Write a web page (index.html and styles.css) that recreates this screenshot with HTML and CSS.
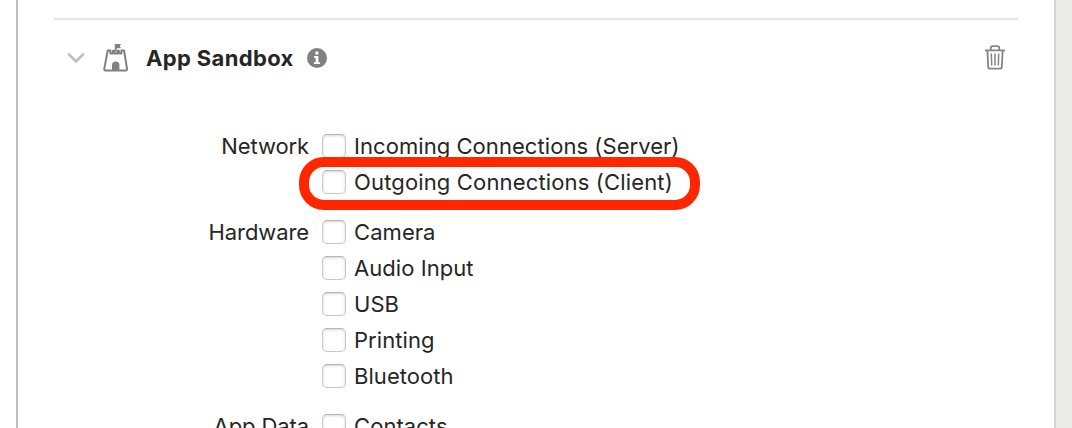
FILE: index.html
```html
<!DOCTYPE html>
<html lang="en">

<head>
    <meta charset="UTF-8">
    <meta name="viewport" content="width=device-width, initial-scale=1.0">
    <title>App Sandbox</title>
    <link rel="stylesheet" href="styles.css">
</head>

<body>
    <div class="panel">
        <div class="header">
            <svg class="arrow" width="18" height="12" viewBox="0 0 18 12">
                <path d="M2 2.5L9 9.5L16 2.5" />
            </svg>
            <svg class="castle" width="26" height="30" viewBox="0 0 26 30">
                <path class="flag" d="M11.8 1h6.2l-1.2 2.2L18 5.2h-4.4V8h-1.8z" />
                <path class="wall" d="M4.7 7.6h2.7v2.8h2.5V7.8h1.6v2.6h2.8V7.8h1.6v2.6h2.5V7.6h2.7l2.9 18q.2 2-1.6 2H2.9q-1.8 0-1.6-2z" />
                <path class="door" d="M9 28v-5.8a3.7 3.7 0 0 1 7.4 0V28z" />
            </svg>
            <h1>App Sandbox</h1>
            <svg class="info" width="20" height="20" viewBox="0 0 20 20">
                <circle cx="10" cy="10" r="10" />
                <path d="M8.4 3.6h3v2.8h-3zM7 8h4.4v6.2H13V16H6.9v-1.8h1.7V9.7H7z" />
            </svg>
            <svg class="trash" width="22" height="26" viewBox="0 0 22 26">
                <path d="M1 5.4h20M6.8 5V2.9q0-1.8 1.8-1.8h4.8q1.8 0 1.8 1.8V5M3.4 5.5l.8 16.4q.1 1.8 1.9 1.8h9.8q1.8 0 1.9-1.8L18.6 5.5" />
                <path class="thin" d="M7.3 8.5l.4 12M11 8.5v12M14.7 8.5l-.4 12" />
            </svg>
        </div>

        <div class="group">
            <div class="title">Network</div>
            <ul class="options">
                <li><span class="check"></span><span>Incoming Connections (Server)</span></li>
                <li class="marked"><span class="check"></span><span class="outgoing">Outgoing Connections (Client)</span></li>
            </ul>
        </div>
        <div class="group">
            <div class="title">Hardware</div>
            <ul class="options">
                <li><span class="check"></span><span>Camera</span></li>
                <li><span class="check"></span><span>Audio Input</span></li>
                <li><span class="check"></span><span>USB</span></li>
                <li><span class="check"></span><span>Printing</span></li>
                <li><span class="check"></span><span>Bluetooth</span></li>
            </ul>
        </div>
        <div class="group">
            <div class="title">App Data</div>
            <ul class="options">
                <li><span class="check"></span><span>Contacts</span></li>
            </ul>
        </div>
    </div>
</body>

</html>
```
FILE: styles.css
```css
* {
    box-sizing: border-box;
}

body {
    display: flex;
    height: 428px;
    margin: 0;
    overflow: hidden;
    background-color: #ebebe9;
    color: #262626;
    font-family: Inter, "Liberation Sans", sans-serif;
    font-size: 22px;
}

.panel {
    width: 1040px;
    height: 428px;
    margin-left: 16px;
    padding: 18px 36px 0;
    overflow: hidden;
    background-color: #fff;
    border-right: 2px solid #d3d3d3;
    border-left: 2px solid #bdbdbd;
    box-shadow: -16px 0 #fff;
}

.header {
    display: flex;
    align-items: center;
    height: 78px;
    margin-bottom: 32px;
    padding: 0 12px 0 13px;
    border-top: 2px solid #e5e5e5;
}

.header h1 {
    margin: 0 0 0 17px;
    font-size: 22px;
    font-weight: 700;
    letter-spacing: 0.35px;
    white-space: nowrap;
}

.arrow {
    fill: none;
    stroke: #bfbfbf;
    stroke-width: 2.6;
    stroke-linecap: round;
    stroke-linejoin: round;
}

.castle {
    margin-left: 18px;
}

.castle .flag,
.castle .door {
    fill: #808080;
}

.castle .wall {
    fill: none;
    stroke: #808080;
    stroke-width: 2;
    stroke-linejoin: round;
}

.info {
    margin-left: 13px;
    fill: #808080;
}

.info path {
    fill: #fff;
}

.trash {
    margin-left: auto;
    fill: none;
    stroke: #858585;
    stroke-width: 1.8;
}

.trash .thin {
    stroke-width: 1.5;
}

.group {
    display: flex;
    gap: 13px;
    margin-bottom: 14px;
    line-height: 36px;
    white-space: nowrap;
}

.title {
    width: 255px;
    text-align: right;
    letter-spacing: -0.1px;
}

.options {
    margin: 0;
    padding: 0;
    list-style: none;
}

.options li {
    position: relative;
    display: flex;
    align-items: center;
    gap: 8px;
    height: 36px;
    letter-spacing: 0.06px;
}

.options .outgoing {
    letter-spacing: 0.15px;
}

.check {
    width: 24px;
    height: 24px;
    background-color: #fff;
    border: 1px solid #c9c9c9;
    border-top-color: #b5b5b5;
    border-radius: 5px;
    box-shadow: inset 0 1px 3px rgba(0, 0, 0, 0.16);
}

/* red outline round the option */
.marked::after {
    content: "";
    position: absolute;
    top: -7px;
    left: -23px;
    box-sizing: border-box;
    width: 401px;
    height: 53px;
    border: 10px solid #ff2600;
    border-radius: 25px;
}
```
